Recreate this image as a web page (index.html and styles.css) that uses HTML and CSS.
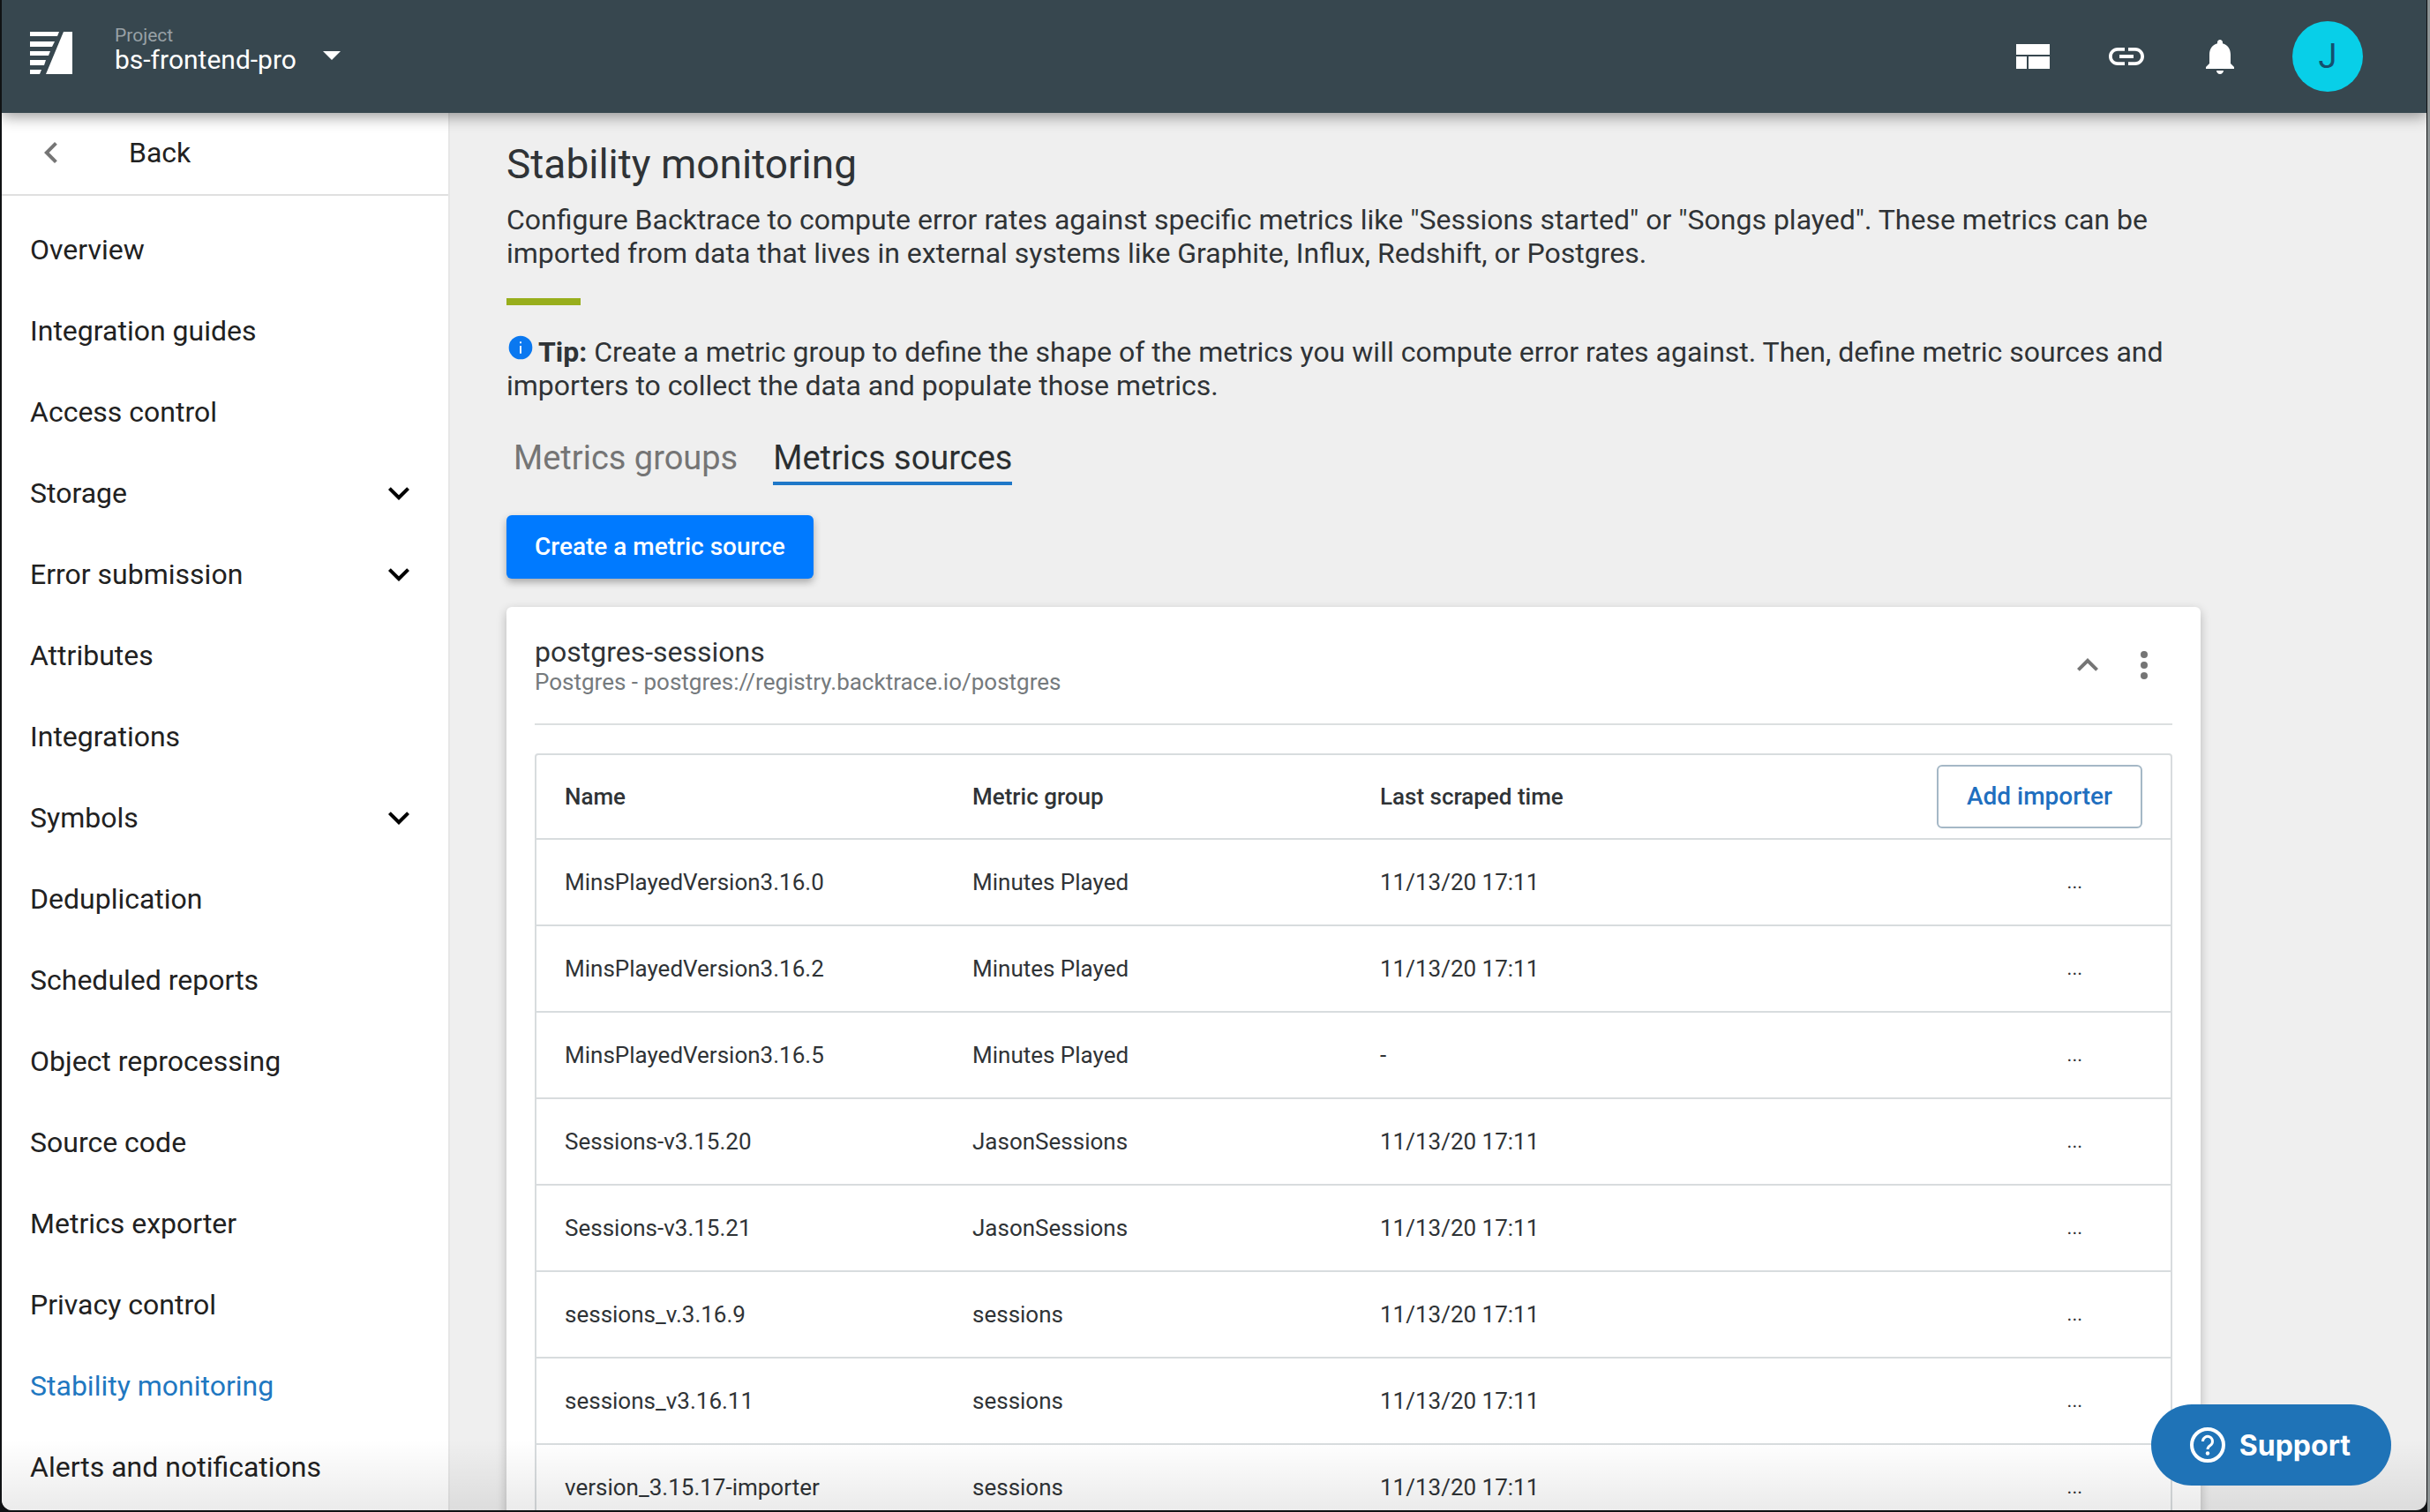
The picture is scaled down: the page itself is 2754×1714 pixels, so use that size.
FILE: index.html
```html
<!DOCTYPE html>
<html lang="en">
<head>
<meta charset="utf-8">
<title>Stability monitoring</title>
<link rel="stylesheet" href="styles.css">
</head>
<body>
<div class="window">
  <header class="topbar">
    <a class="logo" href="#" aria-label="Home">
      <svg width="48" height="48" viewBox="0 0 48 48" fill="#fff"><path d="M38 0H48V48H18ZM0 0H33L31 5H0ZM0 11H28L25 17H0ZM0 22H23L21 27H0ZM0 32H18L16 38H0ZM0 43H13L11 48H0Z"/></svg>
    </a>
    <button class="project" type="button">
      <span class="project-text"><span class="project-label">Project</span><span class="project-name">bs-frontend-pro</span></span>
      <svg width="20" height="12" viewBox="0 0 20 12"><path d="M0 0H20L10 10Z" fill="#fff"/></svg>
    </button>
    <nav class="tools">
      <button type="button" aria-label="Dashboards"><svg width="48" height="48" viewBox="0 0 48 48" fill="#fff"><path d="M5 10H43V22H5ZM5 24H17V38H5ZM19 24H43V38H19Z"/></svg></button>
      <button type="button" aria-label="Copy link"><svg width="48" height="48" viewBox="0 0 24 24" fill="#fff"><path d="M3.9 12c0-1.71 1.39-3.1 3.1-3.1h4V7H7c-2.76 0-5 2.24-5 5s2.24 5 5 5h4v-1.9H7c-1.71 0-3.1-1.39-3.1-3.1zM8 13h8v-2H8v2zm9-6h-4v1.900h4c1.710 0 3.100 1.390 3.100 3.100s-1.390 3.100-3.100 3.100h-4V17h4c2.760 0 5-2.240 5-5s-2.240-5-5-5z"/></svg></button>
      <button type="button" aria-label="Notifications"><svg width="48" height="48" viewBox="0 0 24 24" fill="#fff"><path d="M12 22c1.100 0 2-.9 2-2h-4c0 1.100.89 2 2 2zm6-6v-5c0-3.070-1.640-5.640-4.500-6.320V4c0-.83-.67-1.500-1.500-1.500s-1.500.67-1.500 1.500v.68C7.630 5.360 6 7.920 6 11v5l-2 2v1h16v-1l-2-2z"/></svg></button>
      <button class="avatar" type="button">J</button>
    </nav>
  </header>
  <div class="body">
    <aside class="sidebar">
      <a class="back" href="#"><svg width="48" height="48" viewBox="0 0 24 24"><path d="M15.410 7.410 14 6l-6 6 6 6 1.410-1.410L10.830 12z" fill="#757575"/></svg><span>Back</span></a>
      <nav class="menu">
        <a href="#">Overview</a>
        <a href="#">Integration guides</a>
        <a href="#">Access control</a>
        <a href="#">Storage<svg width="48" height="48" viewBox="0 0 24 24"><path d="M16.590 8.590 12 13.170 7.410 8.590 6 10l6 6 6-6z"/></svg></a>
        <a href="#">Error submission<svg width="48" height="48" viewBox="0 0 24 24"><path d="M16.590 8.590 12 13.170 7.410 8.590 6 10l6 6 6-6z"/></svg></a>
        <a href="#">Attributes</a>
        <a href="#">Integrations</a>
        <a href="#">Symbols<svg width="48" height="48" viewBox="0 0 24 24"><path d="M16.590 8.590 12 13.170 7.410 8.590 6 10l6 6 6-6z"/></svg></a>
        <a href="#">Deduplication</a>
        <a href="#">Scheduled reports</a>
        <a href="#">Object reprocessing</a>
        <a href="#">Source code</a>
        <a href="#">Metrics exporter</a>
        <a href="#">Privacy control</a>
        <a class="active" href="#" aria-current="page">Stability monitoring</a>
        <a href="#">Alerts and notifications</a>
      </nav>
    </aside>
    <main class="main">
      <div class="content">
        <h1>Stability monitoring</h1>
        <p class="intro">Configure Backtrace to compute error rates against specific metrics like "Sessions started" or "Songs played". These metrics can be imported from data that lives in external systems like Graphite, Influx, Redshift, or Postgres.</p>
        <hr class="accent">
        <p class="tip"><svg class="info" width="32" height="32" viewBox="0 0 24 24"><circle cx="12" cy="12" r="10" fill="#0a78f0"/><path d="M11.300 7h1.400v1.500h-1.400zM11.300 10.500h1.400V17h-1.400z" fill="#fff"/></svg><b>Tip:</b> Create a metric group to define the shape of the metrics you will compute error rates against. Then, define metric sources and importers to collect the data and populate those metrics.</p>
        <nav class="tabs">
          <a href="#">Metrics groups</a>
          <a class="active" href="#">Metrics sources</a>
        </nav>
        <button class="create" type="button">Create a metric source</button>
        <section class="card">
          <div class="card-head">
            <div class="card-title"><h2>postgres-sessions</h2><p>Postgres - postgres://registry.backtrace.io/postgres</p></div>
            <div class="card-actions">
              <button type="button" aria-label="Collapse"><svg width="48" height="48" viewBox="0 0 24 24" fill="#757575"><path d="M12 8l-6 6 1.410 1.410L12 10.830l4.590 4.580L18 14z"/></svg></button>
              <button type="button" aria-label="More"><svg width="48" height="48" viewBox="0 0 24 24" fill="#757575"><circle cx="12" cy="6" r="2"/><circle cx="12" cy="12" r="2"/><circle cx="12" cy="18" r="2"/></svg></button>
            </div>
          </div>
          <table>
            <thead><tr><th class="col">Name</th><th class="col">Metric group</th><th class="col">Last scraped time</th><th class="action"><button class="add" type="button">Add importer</button></th></tr></thead>
            <tbody>
              <tr><td>MinsPlayedVersion3.16.0</td><td>Minutes Played</td><td>11/13/20 17:11</td><td class="more">...</td></tr>
              <tr><td>MinsPlayedVersion3.16.2</td><td>Minutes Played</td><td>11/13/20 17:11</td><td class="more">...</td></tr>
              <tr><td>MinsPlayedVersion3.16.5</td><td>Minutes Played</td><td>-</td><td class="more">...</td></tr>
              <tr><td>Sessions-v3.15.20</td><td>JasonSessions</td><td>11/13/20 17:11</td><td class="more">...</td></tr>
              <tr><td>Sessions-v3.15.21</td><td>JasonSessions</td><td>11/13/20 17:11</td><td class="more">...</td></tr>
              <tr><td>sessions_v.3.16.9</td><td>sessions</td><td>11/13/20 17:11</td><td class="more">...</td></tr>
              <tr><td>sessions_v3.16.11</td><td>sessions</td><td>11/13/20 17:11</td><td class="more">...</td></tr>
              <tr><td>version_3.15.17-importer</td><td>sessions</td><td>11/13/20 17:11</td><td class="more">...</td></tr>
            </tbody>
          </table>
        </section>
      </div>
    </main>
  </div>
  <div class="fade"></div>
  <button class="support" type="button"><svg width="40" height="40" viewBox="0 0 40 40" fill="none" stroke="#fff"><circle cx="20" cy="20" r="18" stroke-width="4"/><path d="M14.500 16a5.500 5.500 0 1 1 8.500 4.500c-2 1.300-3 2.200-3 4.500" stroke-width="3"/><circle cx="20" cy="29.500" r="2.200" fill="#fff" stroke="none"/></svg>Support</button>
</div>
</body>
</html>
```
FILE: styles.css
```css
* { box-sizing: border-box; }
body {
  margin: 0;
  height: 100vh;
  padding: 0 1px 2px 2px;
  border-right: 3px solid #8d9394;
  background: #101214;
  font-family: Roboto, "Liberation Sans", sans-serif;
  font-size: 32px;
  line-height: 38px;
  color: #2f3336;
}
button { border: 0; padding: 0; margin: 0; background: none; font: inherit; color: inherit; }
a { color: inherit; text-decoration: none; }
svg { display: block; flex: none; }
h1, h2, p { margin: 0; font-weight: 400; }

.window {
  position: relative;
  display: flex;
  flex-direction: column;
  height: 100%;
  overflow: hidden;
  border-radius: 0 0 12px 12px;
  background: #efefef;
}

.topbar {
  z-index: 1;
  flex: none;
  display: flex;
  align-items: center;
  height: 128px;
  padding: 0 72px 0 32px;
  background: #37474f;
  box-shadow: 0 4px 16px rgba(0, 0, 0, .4);
  color: #fff;
}
.logo { padding-bottom: 8px; }
.project { display: flex; align-items: center; gap: 30px; margin-left: 48px; text-align: left; }
.project-text { display: flex; flex-direction: column; padding-bottom: 16px; }
.project-label { font-size: 21px; line-height: 24px; color: #98a1a6; }
.project-name { font-size: 30px; line-height: 32px; }
.tools { display: flex; align-items: center; gap: 58px; margin-left: auto; }
.avatar { width: 80px; height: 80px; border-radius: 50%; background: #08cfe8; color: #14506e; font-size: 38px; }

.body { flex: 1; min-height: 0; display: flex; }
.sidebar { flex: none; width: 508px; background: #fff; border-right: 2px solid #e6e6e6; color: #212121; }
.back { display: flex; align-items: center; gap: 64px; height: 94px; padding: 0 32px 2px; border-bottom: 2px solid #e0e0e0; }
.menu { display: flex; flex-direction: column; padding-top: 16px; }
.menu a { display: flex; align-items: center; justify-content: space-between; height: 92px; padding: 0 32px 2px; }
.menu .active { color: #1f78c1; }

.main { flex: 1; min-width: 0; padding: 32px 64px; }
.content { max-width: 1920px; }
h1 { font-size: 46px; line-height: 52px; }
.intro { margin-top: 18px; }
.accent { width: 84px; height: 8px; margin: 32px 0; border: 0; background: #98ae1c; }
.info { display: inline-block; vertical-align: 0; margin-right: 4px; }
.tabs { display: flex; gap: 40px; margin-top: 28px; padding: 0 8px; font-size: 38px; line-height: 50px; color: #757575; }
.tabs a { padding: 10px 0 2px; border-bottom: 4px solid transparent; }
.tabs .active { color: #2b2f31; border-color: #1f78c8; }
.create { height: 72px; margin-top: 34px; padding: 0 32px; border-radius: 6px; background: #007aff; box-shadow: 0 4px 8px rgba(0, 0, 0, .3); color: #fff; font-size: 28px; font-weight: 500; }

.card { margin-top: 32px; padding: 32px; border-radius: 6px; background: #fff; box-shadow: 0 4px 12px rgba(0, 0, 0, .24); }
.card-head { display: flex; justify-content: space-between; height: 102px; border-bottom: 2px solid #dcdfe0; }
.card-title h2 { font-size: 32px; line-height: 38px; }
.card-title p { font-size: 26px; line-height: 30px; color: #757a7d; }
.card-actions { display: flex; align-items: flex-start; gap: 16px; padding: 10px 8px 0 0; }

table { width: 100%; margin-top: 32px; table-layout: fixed; border-collapse: separate; border-spacing: 0; border: 2px solid #d8dcde; border-radius: 4px; font-size: 26px; line-height: 32px; }
th, td { padding: 0 32px; text-align: left; }
th { height: 94px; font-weight: 500; }
.col { width: 462px; }
td { height: 98px; border-top: 2px solid #d8dcde; }
.action { text-align: right; }
.more { padding-right: 100px; text-align: right; font-size: 22px; }
.add { height: 72px; padding: 0 32px; border: 2px solid #a5b8c6; border-radius: 6px; color: #1f6fbf; font-size: 28px; font-weight: 500; }

/* Overlays pinned to the bottom of the window */
.fade { position: absolute; left: 0; right: 0; bottom: 0; height: 80px; background: linear-gradient(transparent, rgba(0, 0, 0, .08)); pointer-events: none; }
.support { position: absolute; right: 40px; bottom: 28px; display: flex; align-items: center; gap: 16px; height: 92px; padding: 0 46px 0 44px; border-radius: 46px; background: #1f73b7; color: #fff; font: 700 32px Inter, sans-serif; }
```
